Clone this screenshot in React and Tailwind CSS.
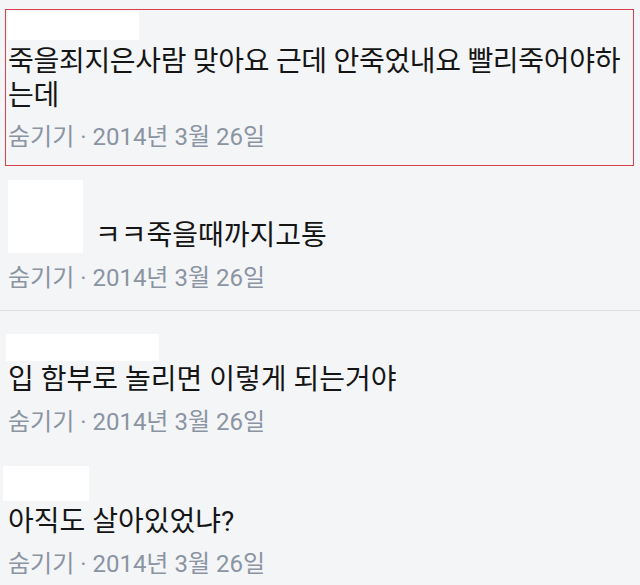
const font = { fontFamily: '"Roboto", "Noto Sans CJK KR", sans-serif' };

const Meta = () => (
  <p className="text-[24px] leading-[30px] text-[#8a94a2]">
    숨기기 · 2014년 3월 26일
  </p>
);

const NameBox = ({ className }) => <div className={`bg-white ${className}`} />;

const App = () => {
  return (
    <div className="w-[640px] h-[585px] overflow-hidden bg-[#f4f5f7]" style={font}>
      {/* highlighted comment */}
      <div className="pt-[9px] pl-[5px] pr-[6px]">
        <div className="border border-[#d8404c] pt-[1px] pl-[2px] pb-[13px]">
          <NameBox className="w-[131px] h-[29px]" />
          <p className="mt-[5px] w-[618px] text-[28px] leading-[34px] text-[#151515] tracking-[-0.3px]">
            죽을죄지은사람 맞아요 근데 안죽었내요 빨리죽어야하는데
          </p>
          <div className="mt-[9px]">
            <Meta />
          </div>
        </div>
      </div>

      {/* second comment */}
      <div className="pt-[14px] pl-[8px] pb-[17px] border-b border-[#dcdee2]">
        <div className="flex items-end">
          <NameBox className="w-[75px] h-[73px]" />
          <p className="ml-[12px] text-[28px] leading-[34px] text-[#151515]">ㅋㅋ죽을때까지고통</p>
        </div>
        <div className="mt-[10px]">
          <Meta />
        </div>
      </div>

      {/* third comment */}
      <div className="pt-[23px] pl-[6px]">
        <NameBox className="w-[153px] h-[27px]" />
        <p className="mt-[2px] pl-[2px] text-[28px] leading-[34px] text-[#151515]">
          입 함부로 놀리면 이렇게 되는거야
        </p>
        <div className="mt-[10px] pl-[2px]">
          <Meta />
        </div>
      </div>

      {/* fourth comment */}
      <div className="pt-[29px] pl-[3px]">
        <NameBox className="w-[86px] h-[35px]" />
        <p className="mt-[4px] pl-[5px] text-[28px] leading-[34px] text-[#151515]">아직도 살아있었냐?</p>
        <div className="mt-[10px] pl-[5px]">
          <Meta />
        </div>
      </div>
    </div>
  );
};

export default App;
